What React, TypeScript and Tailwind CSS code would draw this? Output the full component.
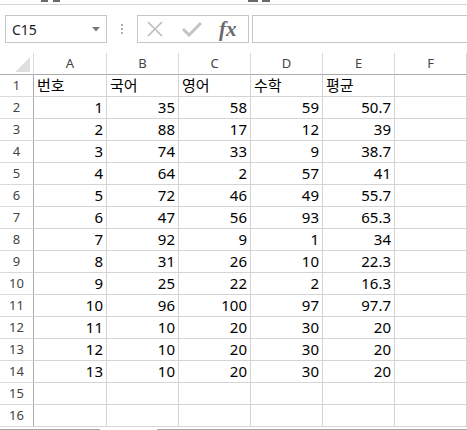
import React from "react";

const cols = ["A", "B", "C", "D", "E", "F"];
const header = ["번호", "국어", "영어", "수학", "평균"];
const data: (number | string)[][] = [
  [1, 35, 58, 59, 50.7],
  [2, 88, 17, 12, 39],
  [3, 74, 33, 9, 38.7],
  [4, 64, 2, 57, 41],
  [5, 72, 46, 49, 55.7],
  [6, 47, 56, 93, 65.3],
  [7, 92, 9, 1, 34],
  [8, 31, 26, 10, 22.3],
  [9, 25, 22, 2, 16.3],
  [10, 96, 100, 97, 97.7],
  [11, 10, 20, 30, 20],
  [12, 10, 20, 30, 20],
  [13, 10, 20, 30, 20],
];

function RowHeader({ n }: { n: number | string }) {
  return (
    <div className="h-[22px] border-r border-r-[#ababab] border-b border-b-[#dadada] flex items-center justify-center text-[13px] text-[#444]">
      {n}
    </div>
  );
}

function Cell({ v, left }: { v?: string | number; left?: boolean }) {
  return (
    <div
      className={
        "h-[22px] border-r border-b border-[#d4d4d4] flex items-end pb-[1px] text-[15px] leading-[20px] text-black whitespace-nowrap overflow-visible " +
        (left ? "justify-start pl-[3px]" : "justify-end pr-[3px]")
      }
    >
      {v}
    </div>
  );
}

export default function App() {
  const rows: (string | number | undefined)[][] = [];
  rows.push([...header, undefined]);
  data.forEach((r) => rows.push([...r, undefined]));
  rows.push([undefined, undefined, undefined, undefined, undefined, undefined]);
  rows.push([undefined, undefined, undefined, undefined, undefined, undefined]);

  return (
    <div
      className="w-[467px] h-[430px] overflow-hidden bg-white relative"
      style={{ fontFamily: '"Noto Sans", "Noto Sans CJK KR", sans-serif' }}
    >
      {/* ribbon remnants */}
      <div className="h-[5px] border-b border-[#d5d5d5] relative">
        <div className="absolute top-0 left-[41px] w-[7px] h-[2px] bg-[#6a6a6a]" />
        <div className="absolute top-0 left-[53px] w-[7px] h-[2px] bg-[#6a6a6a]" />
        <div className="absolute top-0 left-[248px] w-[10px] h-[2px] bg-[#6a6a6a]" />
        <div className="absolute top-0 left-[262px] w-[8px] h-[2px] bg-[#6a6a6a]" />
      </div>

      {/* formula bar */}
      <div className="flex items-stretch h-[28px] mt-[10px] pl-[5px]">
        <div className="w-[102px] border border-[#c6c6c6] flex items-center justify-between pl-[6px] pr-[6px]">
          <span className="text-[14px] text-[#222]">C15</span>
          <svg width="8" height="5" viewBox="0 0 8 5">
            <path d="M0 0 L8 0 L4 4.5 Z" fill="#7a7a7a" />
          </svg>
        </div>
        <div className="w-[30px] flex flex-col items-center justify-center gap-[2px]">
          <div className="w-[2px] h-[2px] bg-[#b0b0b0]" />
          <div className="w-[2px] h-[2px] bg-[#b0b0b0]" />
          <div className="w-[2px] h-[2px] bg-[#b0b0b0]" />
        </div>
        <div className="w-[112px] border border-[#c6c6c6] flex items-center pl-[9px]">
          <svg width="16" height="16" viewBox="0 0 16 16">
            <path d="M1 1 L15 15 M15 1 L1 15" stroke="#bcbcbc" strokeWidth="1.6" fill="none" />
          </svg>
          <svg width="20" height="16" viewBox="0 0 20 16" className="ml-[19px]">
            <path d="M1 8 L7 14 L19 2" stroke="#c4c4c4" strokeWidth="3" fill="none" strokeLinejoin="miter" />
          </svg>
          <span
            className="ml-[17px] italic text-[21px] leading-none text-[#6a6a6a] font-bold"
            style={{ fontFamily: '"Liberation Serif", serif' }}
          >
            fx
          </span>
        </div>
        <div className="flex-1 ml-[3px] border border-r-0 border-[#c6c6c6]" />
      </div>

      {/* grid */}
      <div className="mt-[10px] grid grid-cols-[34px_73px_72px_72px_72px_72px_72px_1px]">
        {/* column header row */}
        <div className="h-[22px] border-r border-r-[#dadada] border-b border-b-[#ababab] relative">
          <svg width="15" height="15" viewBox="0 0 15 15" className="absolute right-[3px] bottom-[2px]">
            <path d="M15 0 L15 15 L0 15 Z" fill="#dfdfdf" />
          </svg>
        </div>
        {cols.map((c) => (
          <div
            key={c}
            className="h-[22px] border-r border-r-[#dadada] border-b border-b-[#ababab] flex items-center justify-center text-[13px] text-[#444]"
          >
            {c}
          </div>
        ))}
        <div className="h-[22px] border-b border-b-[#ababab]" />

        {rows.map((r, i) => (
          <React.Fragment key={i}>
            <RowHeader n={i + 1} />
            {r.map((v, j) => (
              <Cell key={j} v={v} left={i === 0} />
            ))}
            <div className="h-[22px] border-b border-[#d4d4d4]" />
          </React.Fragment>
        ))}
      </div>

      {/* bottom scrollbar edge */}
      <div className="absolute left-0 bottom-0 w-full h-[1px] flex">
        <div className="w-[100px] bg-[#a8a8a8]" />
        <div className="w-[57px] bg-white" />
        <div className="flex-1 bg-[#a8a8a8]" />
      </div>
    </div>
  );
}
